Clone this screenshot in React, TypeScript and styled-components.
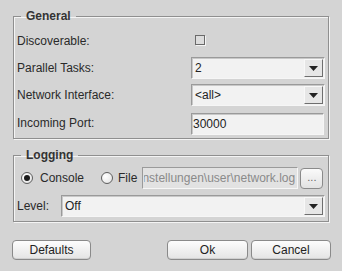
import { useEffect, useRef } from 'react';
import styled, { createGlobalStyle } from 'styled-components';

const GlobalStyle = createGlobalStyle`
  html, body {
    margin: 0;
    padding: 0;
    background: #d4d4d4;
  }
  body {
    font-family: "Liberation Sans", Arial, sans-serif;
    font-size: 12px;
    color: #222;
  }
`;

function Arrow() {
  return (
    <svg width="9" height="5" viewBox="0 0 9 5">
      <path d="M0 0 H9 L4.5 5 Z" fill="#222" />
    </svg>
  );
}

function Combo({ value }: { value: string }) {
  return (
    <ComboBox>
      <ComboText>{value}</ComboText>
      <ComboButton>
        <Arrow />
      </ComboButton>
    </ComboBox>
  );
}

function App() {
  const pathRef = useRef<HTMLInputElement>(null);

  // keep the end of the path visible, like a scrolled line edit
  useEffect(() => {
    const el = pathRef.current;
    if (el) el.scrollLeft = el.scrollWidth;
  }, []);

  return (
    <>
      <GlobalStyle />
      <Window>
        <Group $top={9}>
          <Legend>General</Legend>
          <FormGrid>
            <Label>Discoverable:</Label>
            <Cell>
              <Check />
            </Cell>
            <Label>Parallel Tasks:</Label>
            <Combo value="2" />
            <Label>Network Interface:</Label>
            <Combo value="<all>" />
            <Label>Incoming Port:</Label>
            <PortInput>30000</PortInput>
          </FormGrid>
        </Group>

        <Group $top={9} $pad="5px 3px 4px 3px">
          <Legend>Logging</Legend>
          <RadioRow>
            <RadioOption>
              <Radio $checked />
              <span>Console</span>
            </RadioOption>
            <RadioOption $gap={5}>
              <Radio />
              <span>File</span>
            </RadioOption>
            <PathInput
              ref={pathRef}
              readOnly
              value="C:\Dokumente und Einstellungen\user\network.log"
            />
            <BrowseButton>...</BrowseButton>
          </RadioRow>
          <LevelRow>
            <Label>Level:</Label>
            <Combo value="Off" />
          </LevelRow>
        </Group>

        <ButtonRow>
          <PushButton $w={79}>Defaults</PushButton>
          <Spacer />
          <PushButton $w={81}>Ok</PushButton>
          <PushButton $w={80}>Cancel</PushButton>
        </ButtonRow>
      </Window>
    </>
  );
}

const Window = styled.div`
  width: 342px;
  height: 271px;
  box-sizing: border-box;
  padding: 0 13px 0 13px;
  display: flex;
  flex-direction: column;
`;

const Group = styled.fieldset<{ $top: number; $pad?: string }>`
  margin: ${p => p.$top}px 0 0 0;
  padding: ${p => p.$pad ?? '7px 3px 3px 3px'};
  width: 316px;
  box-sizing: border-box;
  border: 1px solid #8f8f8f;
  box-shadow: inset 1px 1px 0 #f4f4f4, 1px 1px 0 #f4f4f4;
  min-width: 0;
`;

const Legend = styled.legend`
  font-weight: bold;
  line-height: 14px;
  padding: 0 5px;
  margin-left: 4px;
  color: #333;
`;

const FormGrid = styled.div`
  display: grid;
  grid-template-columns: 174px 1fr;
  grid-template-rows: 22px 22px 22px 24px;
  row-gap: 5px;
  align-items: center;
`;

const Label = styled.span`
  white-space: nowrap;
  line-height: 22px;
  color: #2a2a2a;
`;

const Cell = styled.div`
  display: flex;
  align-items: center;
  height: 22px;
`;

const Check = styled.div`
  width: 8px;
  height: 8px;
  margin: -3px 0 0 4px;
  border: 1px solid #6a6a6a;
  background: #dcdcdc;
  box-shadow: 1px 1px 0 #f4f4f4;
`;

const ComboBox = styled.div`
  height: 22px;
  box-sizing: border-box;
  display: flex;
  align-items: center;
  background: #f2f2f2;
  border: 1px solid;
  border-color: #9a9a9a #f6f6f6 #f6f6f6 #9a9a9a;
  box-shadow: inset 1px 1px 0 #c8c8c8;
  padding: 1px;
`;

const ComboText = styled.span`
  flex: 1;
  padding-left: 2px;
  color: #222;
`;

const ComboButton = styled.div`
  width: 19px;
  height: 18px;
  box-sizing: border-box;
  display: flex;
  align-items: center;
  justify-content: center;
  background: #e6e6e6;
  border: 1px solid;
  border-color: #f8f8f8 #6e6e6e #6e6e6e #f8f8f8;
  padding-top: 1px;
`;

const PortInput = styled.div`
  height: 22px;
  align-self: end;
  margin-right: 1px;
  box-sizing: border-box;
  display: flex;
  align-items: center;
  background: #f2f2f2;
  border: 1px solid;
  border-color: #9a9a9a #f6f6f6 #f6f6f6 #9a9a9a;
  box-shadow: inset 1px 1px 0 #c8c8c8;
  padding-left: 1px;
  color: #222;
`;

const RadioRow = styled.div`
  display: flex;
  align-items: center;
  height: 22px;
  padding-left: 4px;
`;

const RadioOption = styled.label<{ $gap?: number }>`
  display: flex;
  align-items: center;
  gap: ${p => p.$gap ?? 7}px;
  margin-right: ${p => (p.$gap ? 5 : 17)}px;
  color: #2a2a2a;
  white-space: nowrap;
`;

const Radio = styled.span<{ $checked?: boolean }>`
  width: 12px;
  height: 12px;
  box-sizing: border-box;
  border-radius: 50%;
  border: 1px solid #5e5e5e;
  background: radial-gradient(circle at 35% 35%, #ffffff, #e0e0e0);
  position: relative;
  &::after {
    content: '';
    display: ${p => (p.$checked ? 'block' : 'none')};
    position: absolute;
    left: 2px;
    top: 2px;
    width: 6px;
    height: 6px;
    border-radius: 50%;
    background: #1a1a1a;
  }
`;

const PathInput = styled.input`
  width: 156px;
  height: 22px;
  box-sizing: border-box;
  margin: 0;
  padding: 0 2px 0 1px;
  outline: none;
  background: #e2e2e2;
  border: 1px solid;
  border-color: #9a9a9a #f6f6f6 #f6f6f6 #9a9a9a;
  font-family: "Liberation Sans", Arial, sans-serif;
  font-size: 12px;
  color: #8a8a8a;
  flex-shrink: 0;
`;

const BrowseButton = styled.div`
  width: 23px;
  height: 21px;
  margin-left: 2px;
  box-sizing: border-box;
  border: 1px solid #8a8a8a;
  border-radius: 4px;
  background: linear-gradient(#fafafa, #e2e2e2);
  color: #666;
  font-size: 11px;
  display: flex;
  align-items: center;
  justify-content: center;
  padding-bottom: 2px;
`;

const LevelRow = styled.div`
  display: grid;
  grid-template-columns: 44px 1fr;
  align-items: center;
  margin-top: 6px;
  height: 22px;
`;

const ButtonRow = styled.div`
  display: flex;
  align-items: center;
  gap: 3px;
  margin: 18px -2px 0 -1px;
`;

const Spacer = styled.div`
  flex: 1;
`;

const PushButton = styled.button<{ $w: number }>`
  width: ${p => p.$w}px;
  height: 20px;
  box-sizing: border-box;
  padding: 0;
  border: 1px solid #8a8a8a;
  border-radius: 4px;
  background: linear-gradient(#fdfdfd, #e4e4e4);
  box-shadow: inset 0 -1px 0 #d0d0d0;
  font-family: "Liberation Sans", Arial, sans-serif;
  font-size: 12px;
  color: #222;
`;

export default App;
